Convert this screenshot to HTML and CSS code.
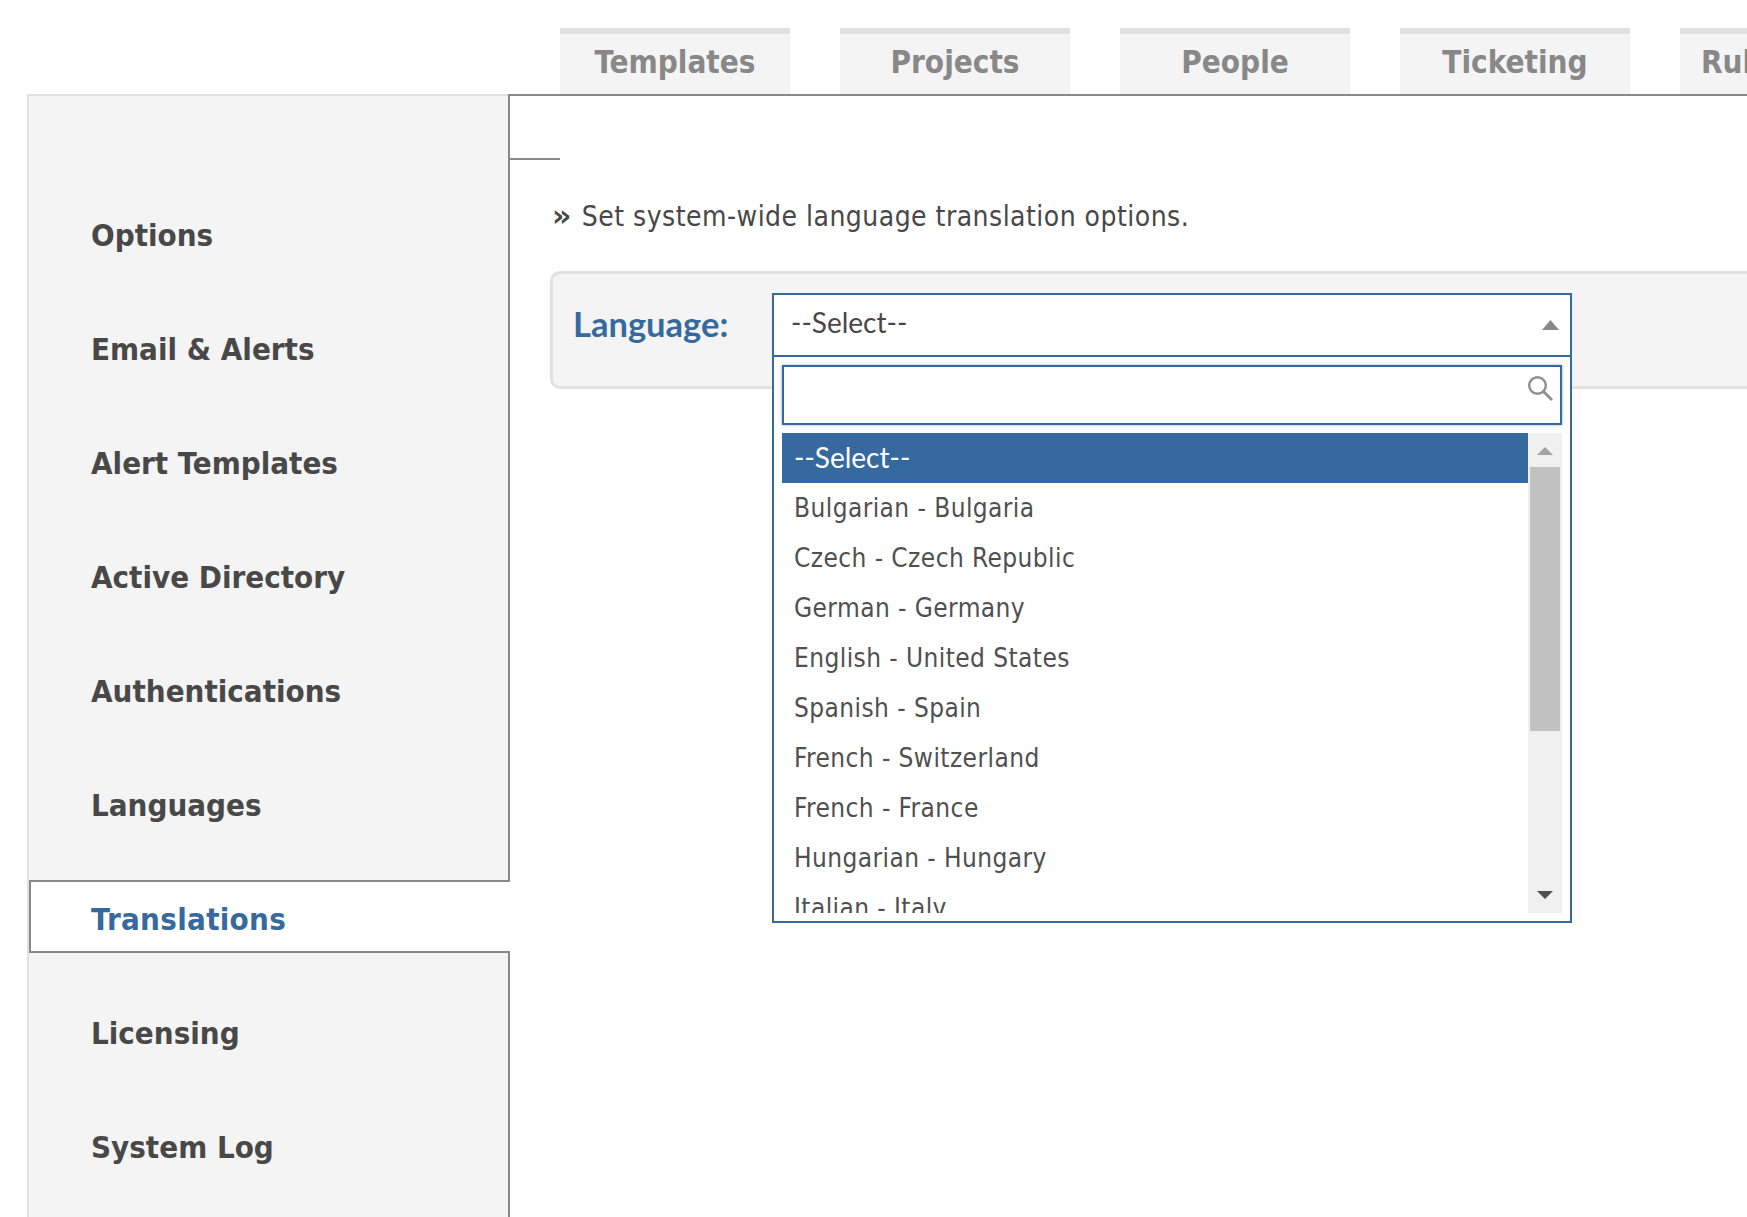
FILE: index.html
```html
<!DOCTYPE html>
<html>
<head>
<meta charset="utf-8">
<title>Translations</title>
<link rel="stylesheet" href="styles.css">
</head>
<body>

<div class="tabs">
  <a class="tab">Templates</a>
  <a class="tab">Projects</a>
  <a class="tab">People</a>
  <a class="tab">Ticketing</a>
  <a class="tab tab-cut">Rules</a>
</div>

<div class="main">
  <ul class="side">
    <li>Options</li>
    <li>Email &amp; Alerts</li>
    <li>Alert Templates</li>
    <li>Active Directory</li>
    <li>Authentications</li>
    <li>Languages</li>
    <li class="current">Translations</li>
    <li>Licensing</li>
    <li>System Log</li>
  </ul>

  <div class="content">
    <div class="notch"></div>
    <p class="intro"><span class="raquo">&raquo;</span>Set system-wide language translation options.</p>

    <div class="panel">
      <label class="panel-label">Language:</label>
      <div class="combo">
        <div class="combo-value">
          <span>--Select--</span>
          <svg class="combo-arrow" width="17" height="10" viewBox="0 0 17 10"><path d="M8.5 0 L17 10 L0 10 Z" fill="#888"/></svg>
        </div>
        <div class="drop">
          <div class="search">
            <svg class="search-icon" width="25" height="25" viewBox="0 0 25 25" fill="none" stroke="#8f8f8f">
              <circle cx="9.5" cy="9.5" r="8.3" stroke-width="2.4"/>
              <path d="M15.5 15.5 L24 24" stroke-width="2.8"/>
            </svg>
          </div>
          <div class="list-wrap">
            <ul class="list">
              <li class="selected">--Select--</li>
              <li>Bulgarian - Bulgaria</li>
              <li>Czech - Czech Republic</li>
              <li>German - Germany</li>
              <li>English - United States</li>
              <li>Spanish - Spain</li>
              <li>French - Switzerland</li>
              <li>French - France</li>
              <li>Hungarian - Hungary</li>
              <li>Italian - Italy</li>
            </ul>
            <div class="scroll">
              <svg class="scroll-btn" width="16" height="8" viewBox="0 0 16 8"><path d="M8 0 L16 8 L0 8 Z" fill="#a3a3a3"/></svg>
              <div class="thumb"></div>
              <svg class="scroll-btn down" width="16" height="8" viewBox="0 0 16 8"><path d="M0 0 L16 0 L8 8 Z" fill="#505050"/></svg>
            </div>
          </div>
        </div>
      </div>
    </div>
  </div>
</div>

</body>
</html>
```

FILE: styles.css
```css
html, body {
    margin: 0;
    height: 100%;
    overflow: hidden;
}
body {
    background: #fff;
    color: #484848;
    font-family: "DejaVu Sans", sans-serif;
    font-stretch: condensed;
}
ul {
    list-style: none;
    margin: 0;
    padding: 0;
}

/* top tabs */
.tabs {
    display: flex;
    gap: 50px;
    padding: 28px 0 0 560px;
    height: 94px;
    box-sizing: border-box;
}
.tab {
    flex: 0 0 230px;
    height: 66px;
    box-sizing: border-box;
    border-top: 6px solid #e1e1e1;
    background: #f4f4f4;
    color: #888;
    font-size: 31.2px;
    font-weight: bold;
    line-height: 56px;
    text-align: center;
}
.tab-cut {
    padding-left: 21px;
    text-align: left;
}

/* left menu */
.main {
    display: flex;
    height: calc(100vh - 94px);
}
.side {
    flex: 0 0 481px;
    box-sizing: border-box;
    margin-left: 27px;
    padding-top: 101px;
    background: #f4f4f4;
    border-top: 2px solid #e1e1e1;
    border-left: 2px solid #e1e1e1;
}
.side li {
    height: 72px;
    box-sizing: border-box;
    margin-bottom: 42px;
    padding-left: 62px;
    font-size: 31px;
    font-weight: bold;
    line-height: 76px;
}
.side .current {
    position: relative;
    z-index: 1;
    height: 73px;
    margin-top: -1px;
    margin-right: -2px;
    padding-left: 60px;
    background: #fff;
    border: 2px solid #888;
    border-right: 0;
    color: #366a9f;
    letter-spacing: .3px;
    line-height: 74px;
}

/* right side */
.content {
    flex: 1;
    min-width: 0;
    box-sizing: border-box;
    border-top: 2px solid #888;
    border-left: 2px solid #888;
}
.notch {
    width: 50px;
    height: 64px;
    box-sizing: border-box;
    border-bottom: 2px solid #888;
}
.intro {
    margin: 0 0 0 42px;
    padding-top: 39px;
    font-size: 28px;
    letter-spacing: .47px;
    line-height: 36px;
}
.raquo {
    font-size: 30px;
    font-stretch: normal;
    font-weight: bold;
    line-height: 0;
    margin-right: 10px;
}
.panel {
    display: flex;
    margin: 36px 0 0 40px;
    height: 118px;
    box-sizing: border-box;
    padding: 19px 0 0 20px;
    background: #f4f4f4;
    border: 3px solid #e1e1e1;
    border-right: 0;
    border-radius: 10px 0 0 10px;
}
.panel-label {
    width: 199px;
    color: #366a9f;
    font-family: "Lato", sans-serif;
    font-size: 34.5px;
    font-weight: bold;
    line-height: 62px;
}
.combo {
    position: relative;
    width: 800px;
    height: 64px;
}
.combo-value {
    display: flex;
    justify-content: space-between;
    align-items: center;
    height: 64px;
    box-sizing: border-box;
    padding: 0 11px 0 17px;
    background: #fff;
    border: 2px solid #366a9f;
    font-family: "Lato", sans-serif;
    font-size: 28px;
}
.combo-value span {
    margin-top: -6px;
}
.drop {
    position: absolute;
    top: 62px;
    left: 0;
    right: 0;
    z-index: 2;
    height: 568px;
    box-sizing: border-box;
    padding: 8px;
    background: #fff;
    border: 2px solid #366a9f;
}
.search {
    position: relative;
    height: 60px;
    box-sizing: border-box;
    border: 2px solid #366a9f;
    box-shadow: 0 0 3px rgba(54, 106, 159, .5);
}
.search-icon {
    position: absolute;
    top: 9px;
    right: 7px;
}
.list-wrap {
    display: flex;
    height: 480px;
    margin-top: 8px;
}
.list {
    flex: 1;
    overflow: hidden;
    font-size: 26px;
    letter-spacing: .42px;
    color: #505050;
}
.list li {
    height: 50px;
    padding-left: 12px;
    line-height: 50px;
}
.list .selected {
    background: #366a9f;
    color: #fff;
    font-family: "Lato", sans-serif;
    font-size: 28px;
    letter-spacing: 0;
    line-height: 48px;
}
.scroll {
    display: flex;
    flex-direction: column;
    align-items: center;
    flex: 0 0 34px;
    background: #f0f0f0;
}
.scroll-btn {
    flex: none;
    margin-top: 14px;
}
.thumb {
    flex: none;
    width: 30px;
    height: 264px;
    margin-top: 12px;
    background: #c1c1c1;
}
.scroll-btn.down {
    margin-top: 160px;
}
```
